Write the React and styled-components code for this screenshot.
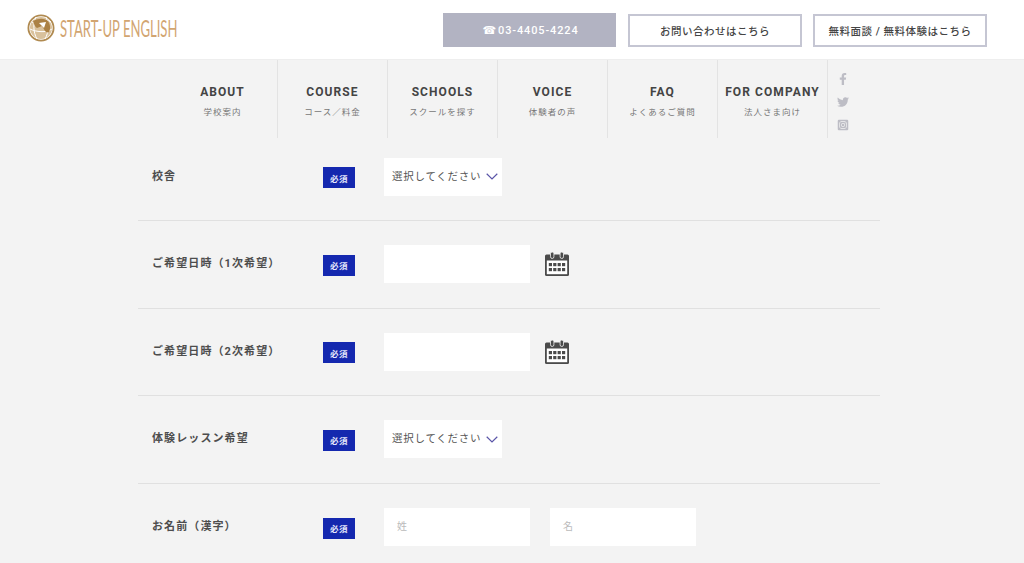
import React from 'react';
import styled, { createGlobalStyle } from 'styled-components';
import { FaFacebookF, FaTwitter, FaInstagramSquare } from 'react-icons/fa';

const GlobalStyle = createGlobalStyle`
  html, body {
    margin: 0;
    padding: 0;
    height: 563px;
    overflow: hidden;
    background: #f3f3f3;
    font-family: "Roboto", "Noto Sans CJK JP", sans-serif;
    color: #444;
  }
  * { box-sizing: border-box; }
`;

const Header = styled.header`
  display: flex;
  align-items: center;
  justify-content: space-between;
  height: 60px;
  padding: 0 37px 0 27px;
  background: #fff;
  border-bottom: 1px solid #eee;
`;
const Logo = styled.div`
  display: flex;
  align-items: center;
  gap: 5px;
  width: 160px;
  margin-bottom: 4px;
`;
const LogoMarkBox = styled.span`
  display: flex;
  flex-shrink: 0;
`;
const LogoText = styled.span`
  display: inline-block;
  font-family: "Lato", sans-serif;
  font-size: 24px;
  line-height: 28px;
  white-space: nowrap;
  color: #d2a571;
  transform: scaleX(0.545);
  transform-origin: left center;
`;
const HeaderActions = styled.div`
  display: flex;
  align-items: center;
  gap: 11px;
  margin-top: 2px;
`;
const HeaderButton = styled.a`
  display: flex;
  align-items: center;
  justify-content: center;
  width: ${props => props.$width}px;
  height: 33px;
  border: 2px solid #c5c6d3;
  background: #fff;
  font-size: 10.5px;
  font-weight: 500;
  letter-spacing: 0.05em;
  color: #444;
`;
const PhoneButton = styled(HeaderButton)`
  height: 34px;
  margin-top: -1px;
  margin-right: 1px;
  padding-left: 2px;
  background: #b2b3c2;
  border-color: #b2b3c2;
  color: #fff;
  font-size: 11px;
  letter-spacing: 0.08em;
`;
const PhoneGlyph = styled.span`
  font-family: "DejaVu Sans", sans-serif;
  font-size: 11px;
  margin-right: 1px;
`;

const Nav = styled.nav`
  display: flex;
  height: 78px;
  margin-left: 168px;
`;
const NavItem = styled.a`
  display: flex;
  flex-direction: column;
  align-items: center;
  width: 110px;
  padding-top: 24px;
  border-right: 1px solid #e3e3e3;
`;
const NavTitle = styled.span`
  font-size: 12px;
  font-weight: 700;
  line-height: 16px;
  letter-spacing: 0.09em;
  white-space: nowrap;
  color: #444;
`;
const NavSub = styled.span`
  margin-top: 5px;
  font-size: 8.5px;
  line-height: 14px;
  letter-spacing: 0.12em;
  white-space: nowrap;
  color: #777;
`;
const Social = styled.div`
  display: flex;
  flex-direction: column;
  align-items: center;
  gap: 11px;
  width: 30px;
  padding-top: 13px;
  color: #bdbdc5;
  font-size: 12px;
`;

const Form = styled.form`
  width: 742px;
  margin-left: 138px;
`;
const Row = styled.div`
  display: flex;
  align-items: center;
  height: ${props => (props.$first ? 83 : 87.5)}px;
  padding-top: ${props => (props.$first ? 20 : 24.5)}px;
  padding-bottom: 24.5px;
  border-bottom: ${props => (props.$last ? 'none' : '1px solid #e0e0e0')};
`;
const Label = styled.label`
  width: 171px;
  padding-left: 14px;
  margin-bottom: 4px;
  font-size: 11px;
  font-weight: 700;
  letter-spacing: 0.1em;
  white-space: nowrap;
  color: #4d4d4d;
`;
const Badge = styled.span`
  display: flex;
  align-items: center;
  justify-content: center;
  width: 32px;
  height: 21px;
  margin: 1.500px 29px 0 14px;
  background: #1428af;
  color: #e4e7fb;
  font-size: 8.5px;
  font-weight: 700;
  letter-spacing: 0.05em;
`;
const Fields = styled.div`
  display: flex;
  align-items: center;
`;
const TextInput = styled.div`
  display: flex;
  align-items: center;
  width: 146px;
  height: 38px;
  margin-right: ${props => props.$gap || 0}px;
  padding: 0 0 4px 13px;
  background: #fff;
  font-size: 10px;
  color: #bbb;
`;
const Select = styled.div`
  display: flex;
  align-items: center;
  gap: 5px;
  width: 118px;
  height: 38px;
  padding: 0 0 3px 8px;
  background: #fff;
  font-size: 10.5px;
  letter-spacing: 0.07em;
  white-space: nowrap;
  color: #555;
  svg { flex-shrink: 0; margin-top: 3px; }
`;
const CalendarButton = styled.span`
  display: flex;
  margin-left: 15px;
`;

const navItems = [
  ['ABOUT', '学校案内'],
  ['COURSE', 'コース／料金'],
  ['SCHOOLS', 'スクールを探す'],
  ['VOICE', '体験者の声'],
  ['FAQ', 'よくあるご質問'],
  ['FOR COMPANY', '法人さま向け'],
];

const LogoMark = () => (
  <svg width="28" height="28" viewBox="0 0 28 28" fill="none">
    <circle cx="14" cy="14" r="12.6" stroke="#b08a50" strokeWidth="1.8" />
    <circle cx="14" cy="14" r="11" fill="#d9c19c" />
    <path d="M5 9c5-4 13-5 19-1M3 15c6 3 16 4 22 0M9 3c-3 6-3 15 1 22M19 3c3 7 3 15-1 22" stroke="#fff" strokeWidth="1" />
    <path d="M6 7c5-3 12-3 15 0 2 3 3 7 1 11-2 1-3 0-4-1l-3-5-5 2c-2-1-3-4-4-7z" fill="#ab8145" />
    <path d="M12 9l7-1-2 6z" fill="#fff" />
  </svg>
);

const ChevronDown = () => (
  <svg width="12" height="7" viewBox="0 0 12 7" fill="none">
    <path d="M.7.8 6 6l5.300-5.200" stroke="#5a55a8" strokeWidth="1.200" />
  </svg>
);

const CalendarIcon = () => (
  <svg width="24" height="24" viewBox="0 0 24 24">
    <rect x="0" y="2.500" width="24" height="21.500" rx="1.500" fill="#4a4a4a" />
    <rect x="1.800" y="8.500" width="20.400" height="13.700" fill="#fff" />
    <rect x="5.500" y="0" width="3.400" height="6.500" rx="1.700" fill="#4a4a4a" stroke="#f3f3f3" strokeWidth="0.8" />
    <rect x="15.100" y="0" width="3.400" height="6.500" rx="1.700" fill="#4a4a4a" stroke="#f3f3f3" strokeWidth="0.8" />
    {[3.800, 8.200, 12.600, 17].map(x =>
      [11, 16].map(y => (
        <rect key={`${x}-${y}`} x={x} y={y} width="3.200" height="3.200" fill="#4a4a4a" />
      ))
    )}
  </svg>
);

const App = () => (
  <>
    <GlobalStyle />
    <Header>
      <Logo>
        <LogoMarkBox><LogoMark /></LogoMarkBox>
        <LogoText>START-UP ENGLISH</LogoText>
      </Logo>
      <HeaderActions>
        <PhoneButton $width={173}>
          <PhoneGlyph>☎</PhoneGlyph>03-4405-4224
        </PhoneButton>
        <HeaderButton $width={174}>お問い合わせはこちら</HeaderButton>
        <HeaderButton $width={174}>無料面談 / 無料体験はこちら</HeaderButton>
      </HeaderActions>
    </Header>
    <Nav>
      {navItems.map(([title, sub]) => (
        <NavItem key={title}>
          <NavTitle>{title}</NavTitle>
          <NavSub>{sub}</NavSub>
        </NavItem>
      ))}
      <Social>
        <FaFacebookF />
        <FaTwitter />
        <FaInstagramSquare />
      </Social>
    </Nav>
    <Form>
      <Row $first>
        <Label>校舎</Label>
        <Badge>必須</Badge>
        <Select>選択してください<ChevronDown /></Select>
      </Row>
      <Row>
        <Label>ご希望日時（1次希望）</Label>
        <Badge>必須</Badge>
        <Fields>
          <TextInput />
          <CalendarButton><CalendarIcon /></CalendarButton>
        </Fields>
      </Row>
      <Row>
        <Label>ご希望日時（2次希望）</Label>
        <Badge>必須</Badge>
        <Fields>
          <TextInput />
          <CalendarButton><CalendarIcon /></CalendarButton>
        </Fields>
      </Row>
      <Row>
        <Label>体験レッスン希望</Label>
        <Badge>必須</Badge>
        <Select>選択してください<ChevronDown /></Select>
      </Row>
      <Row $last>
        <Label>お名前（漢字）</Label>
        <Badge>必須</Badge>
        <Fields>
          <TextInput $gap={20}>姓</TextInput>
          <TextInput>名</TextInput>
        </Fields>
      </Row>
    </Form>
  </>
);

export default App;
